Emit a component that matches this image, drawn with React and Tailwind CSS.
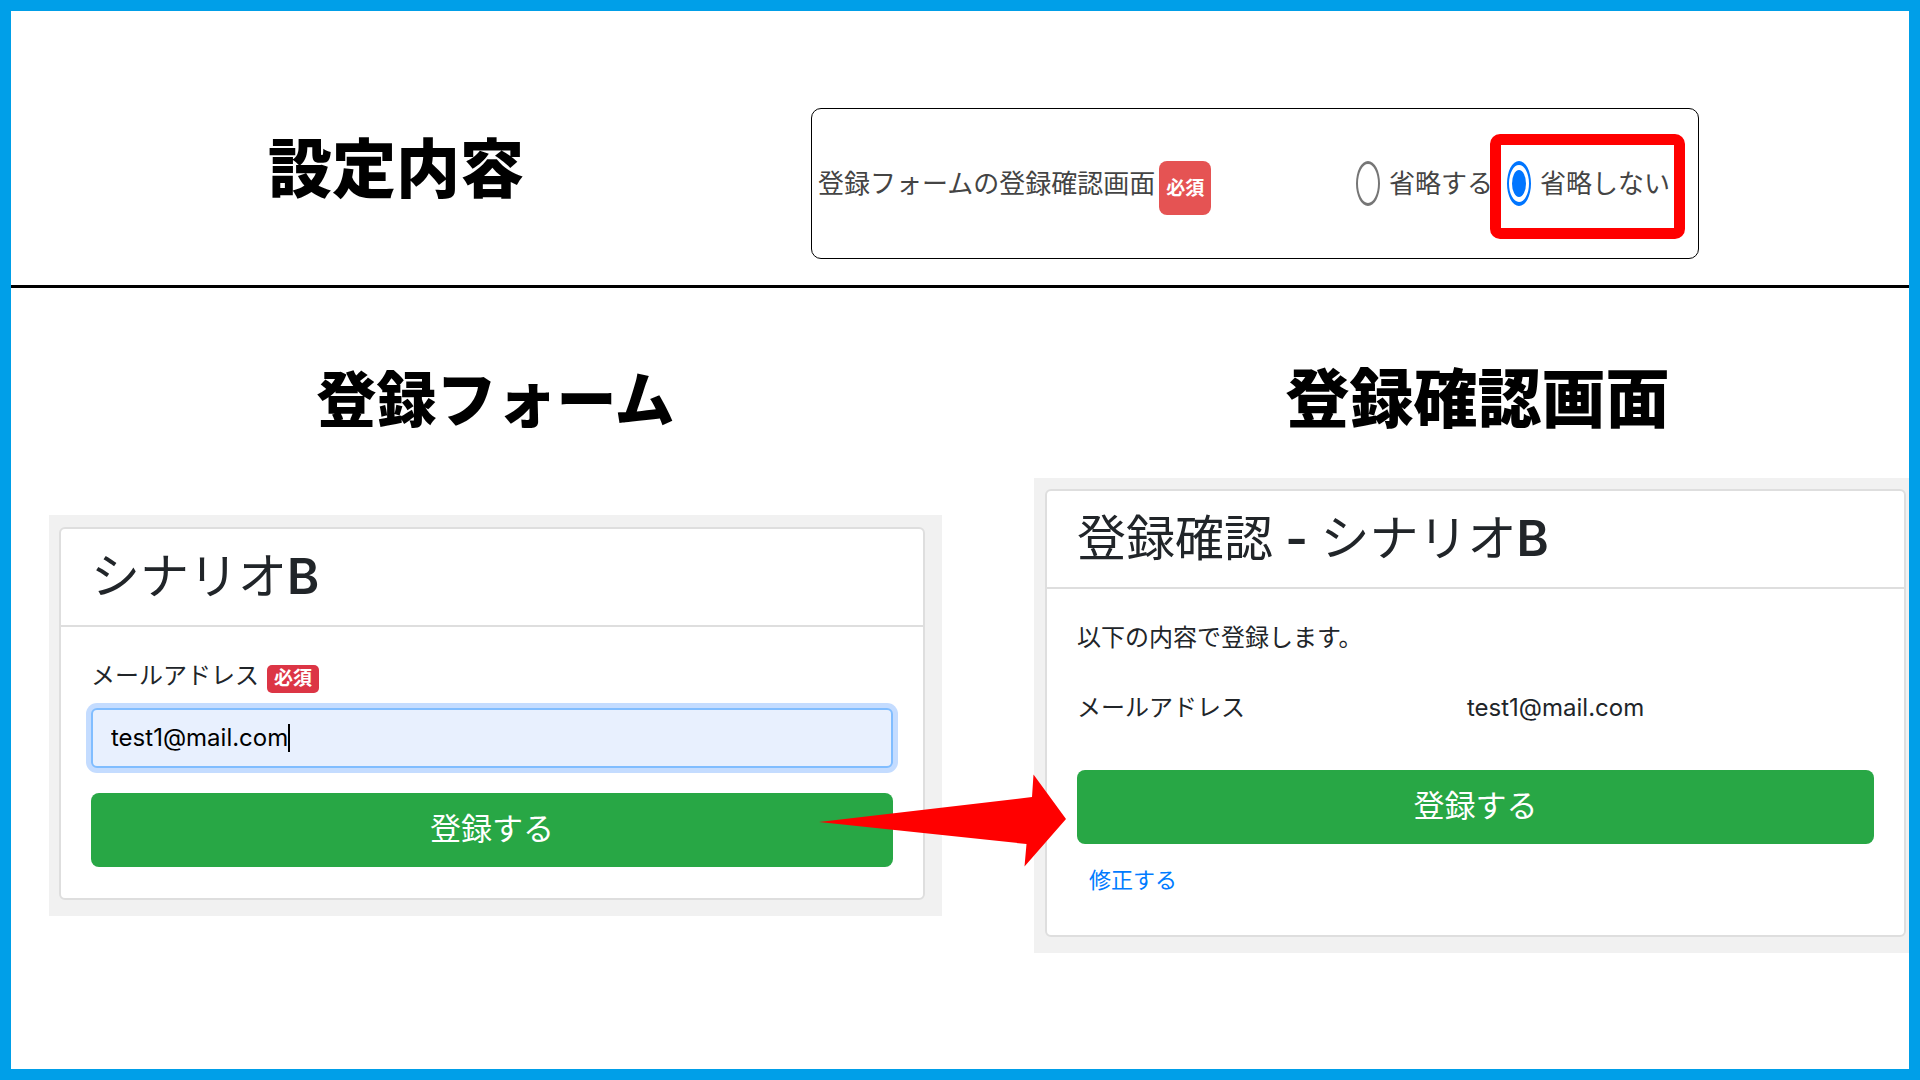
import React, { useState } from 'react';

function SectionTitle({ children, className }) {
  return (
    <h2 className={`text-center font-["Noto_Sans_CJK_JP",sans-serif] font-black whitespace-nowrap text-black ${className}`}>
      {children}
    </h2>
  );
}

function Card({ title, className, children }) {
  return (
    <div className={`bg-[#f1f1f1] ${className}`}>
      <div className="rounded-md border-2 border-[#dedede] bg-white">
        <h3 className="border-b-2 border-[#dedede] px-[30px] pt-[13px] pb-[13px] text-[49px] leading-[70px] font-normal">
          {title}
        </h3>
        {children}
      </div>
    </div>
  );
}

function SubmitButton() {
  return (
    <button
      type="submit"
      className="block w-full rounded-lg bg-[#28a745] pt-3 pb-[14px] text-center text-[31px] leading-[48px] text-white"
    >
      登録する
    </button>
  );
}

// 登録ボタンから確認画面へ向かう矢印
function Arrow() {
  return (
    <svg
      className="pointer-events-none absolute -top-[19px] -right-[174px] z-10"
      width="248"
      height="93"
      viewBox="0 0 248 93"
      aria-hidden="true"
    >
      <path d="M0 48 L213 23 L214.500 0.500 L247 45 L205.500 92.500 L207.500 70 Z" fill="#ff0000" />
    </svg>
  );
}

export default function App() {
  const [confirmMode, setConfirmMode] = useState('show');
  const [email, setEmail] = useState('test1@mail.com');

  return (
    <div className='min-h-screen overflow-hidden border-[11px] border-[#009fe8] bg-white font-["Inter","Noto_Sans_CJK_JP",sans-serif] text-[#212529]'>
      {/* 設定内容 */}
      <section className="grid grid-cols-[770fr_1128fr] items-start border-b-[3px] border-black pb-[26px]">
        <SectionTitle className="mt-[113px] text-[64px] leading-[80px]">設定内容</SectionTitle>

        <div className="mt-[97px] mr-[210px] ml-[30px] flex items-center justify-between rounded-[10px] border border-black py-[52px] pr-7 pl-[6px] text-[26px] leading-[45px] whitespace-nowrap text-[#444444]">
          <div className="flex items-center gap-1">
            <span>登録フォームの登録確認画面</span>
            <span className="-mt-px -mb-[9px] rounded-lg bg-[#e55353] px-[7px] pt-[5px] pb-1 text-[19px] font-bold text-white">
              必須
            </span>
          </div>

          <div className="flex items-center gap-[14px]">
            <label className="flex items-center gap-[9px]">
              <input
                type="radio"
                name="confirmMode"
                checked={confirmMode === 'skip'}
                onChange={() => setConfirmMode('skip')}
                className="h-[45px] w-6 appearance-none rounded-[50%] border-x-2 border-y-[3px] border-[#767676] px-[3px] py-[5px] checked:border-y-4 checked:border-[#0075ff] checked:bg-[#0075ff] checked:bg-clip-content"
              />
              省略する
            </label>
            <label className="relative flex items-center gap-[9px]">
              <input
                type="radio"
                name="confirmMode"
                checked={confirmMode === 'show'}
                onChange={() => setConfirmMode('show')}
                className="h-[45px] w-6 appearance-none rounded-[50%] border-x-2 border-y-[3px] border-[#767676] px-[3px] py-[5px] checked:border-y-4 checked:border-[#0075ff] checked:bg-[#0075ff] checked:bg-clip-content"
              />
              省略しない
              <span className="pointer-events-none absolute -top-[27px] -right-[15px] -bottom-[33px] -left-[17px] rounded-[10px] border-[11px] border-[#ff0000]" />
            </label>
          </div>
        </div>
      </section>

      <section className="grid grid-cols-[893fr_875fr] items-start gap-[92px] pl-[38px]">
        {/* 登録フォーム */}
        <div>
          <SectionTitle className="mt-[68px] mb-[79px] text-[60px] leading-[80px]">登録フォーム</SectionTitle>
          <Card
            title={<>シナリオ<span className="font-semibold">B</span></>}
            className="pt-3 pr-[17px] pb-4 pl-[10px]"
          >
            <form className="px-[30px] pt-[31px] pb-[31px]" onSubmit={(e) => e.preventDefault()}>
              <div className="mb-[14px] flex items-center gap-2">
                <label htmlFor="email" className="text-[24px] leading-9">
                  メールアドレス
                </label>
                <span className="mt-[6px] rounded-[5px] bg-[#dc3545] px-[7px] text-[19px] leading-7 font-bold text-white">
                  必須
                </span>
              </div>
              <div className="flex items-center rounded-md border-2 border-[#80bdff] bg-[#e8f0fe] px-[18px] py-3 ring-[5px] ring-[#c4dcff]">
                <input
                  id="email"
                  type="text"
                  autoComplete="off"
                  value={email}
                  onChange={(e) => setEmail(e.target.value)}
                  className="field-sizing-content text-[24px] leading-8 text-black caret-transparent outline-none"
                />
                <span className="h-7 w-[2px] bg-black" />
              </div>
              <div className="relative mt-[25px]">
                <SubmitButton />
                <Arrow />
              </div>
            </form>
          </Card>
        </div>

        {/* 登録確認画面 */}
        <div>
          <SectionTitle className="mt-[66px] mb-11 pl-3 text-[64px] leading-[80px]">登録確認画面</SectionTitle>
          <Card
            title={<>登録確認<span className="font-semibold"> - </span>シナリオ<span className="font-semibold">B</span></>}
            className="pt-[11px] pr-[3px] pb-4 pl-[11px]"
          >
            <form className="px-[30px] pt-[31px] pb-[39px]" onSubmit={(e) => e.preventDefault()}>
              <p className="text-[24px] leading-9">以下の内容で登録します。</p>
              <dl className="mt-[34px] mb-11 grid grid-cols-[389fr_406fr] text-[24px] leading-9">
                <dt>メールアドレス</dt>
                <dd>{email}</dd>
              </dl>
              <SubmitButton />
              <a href="#edit" className="mt-5 ml-3 inline-block text-[22px] leading-8 text-[#007bff]">
                修正する
              </a>
            </form>
          </Card>
        </div>
      </section>
    </div>
  );
}
